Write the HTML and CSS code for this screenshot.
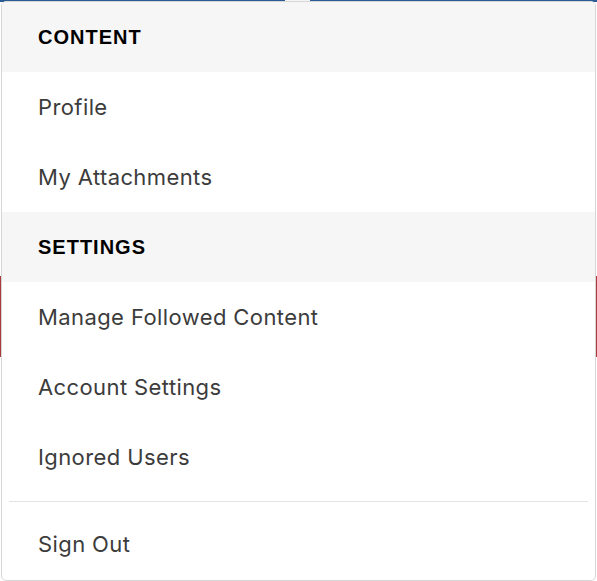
FILE: index.html
```html
<!DOCTYPE html>
<html>
<head>
<meta charset="utf-8">
<link rel="stylesheet" href="styles.css">
</head>
<body>
<div class="page">
  <div class="topbar"></div>
  <div class="redband"></div>
</div>
<div class="caret"></div>
<nav class="menu">
  <div class="menu-head">CONTENT</div>
  <a class="menu-item">Profile</a>
  <a class="menu-item">My Attachments</a>
  <div class="menu-head">SETTINGS</div>
  <a class="menu-item">Manage Followed Content</a>
  <a class="menu-item">Account Settings</a>
  <a class="menu-item">Ignored Users</a>
  <div class="menu-sep"></div>
  <a class="menu-item">Sign Out</a>
</nav>
</body>
</html>
```

FILE: styles.css
```css
html, body {
  margin: 0;
  padding: 0;
  background: #ffffff;
}
body {
  width: 597px;
  height: 581px;
  position: relative;
  overflow: hidden;
}
.page {
  display: flex;
  flex-direction: column;
}
.topbar {
  height: 2px;
  background: #2a5b95;
}
.redband {
  margin-top: 274px;
  height: 81px;
  background: #a83b3b;
}
.caret {
  position: absolute;
  top: 0;
  left: 285px;
  width: 25px;
  height: 2px;
  background: #f5f5f5;
}
.menu {
  position: absolute;
  top: 1px;
  left: 1px;
  width: 593px;
  height: 578px;
  background: #ffffff;
  border: 1px solid #d6d6d6;
  border-radius: 5px;
  overflow: hidden;
  display: flex;
  flex-direction: column;
  font-family: Inter, "Noto Sans", sans-serif;
}
.menu-head {
  box-sizing: border-box;
  height: 70px;
  flex: none;
  display: flex;
  align-items: center;
  padding-left: 36px;
  background: #f6f6f6;
  color: #000000;
  font-family: "Liberation Sans", Arial, sans-serif;
  font-weight: bold;
  font-size: 20px;
  letter-spacing: 1px;
}
.menu-item {
  box-sizing: border-box;
  height: 70px;
  flex: none;
  display: flex;
  align-items: center;
  padding-left: 36px;
  color: #3c3c3c;
  font-size: 22px;
  letter-spacing: 0.4px;
  text-decoration: none;
}
.menu-sep {
  flex: none;
  margin: 9px 7px 7px;
  height: 1px;
  background: #e4e4e4;
}
```
